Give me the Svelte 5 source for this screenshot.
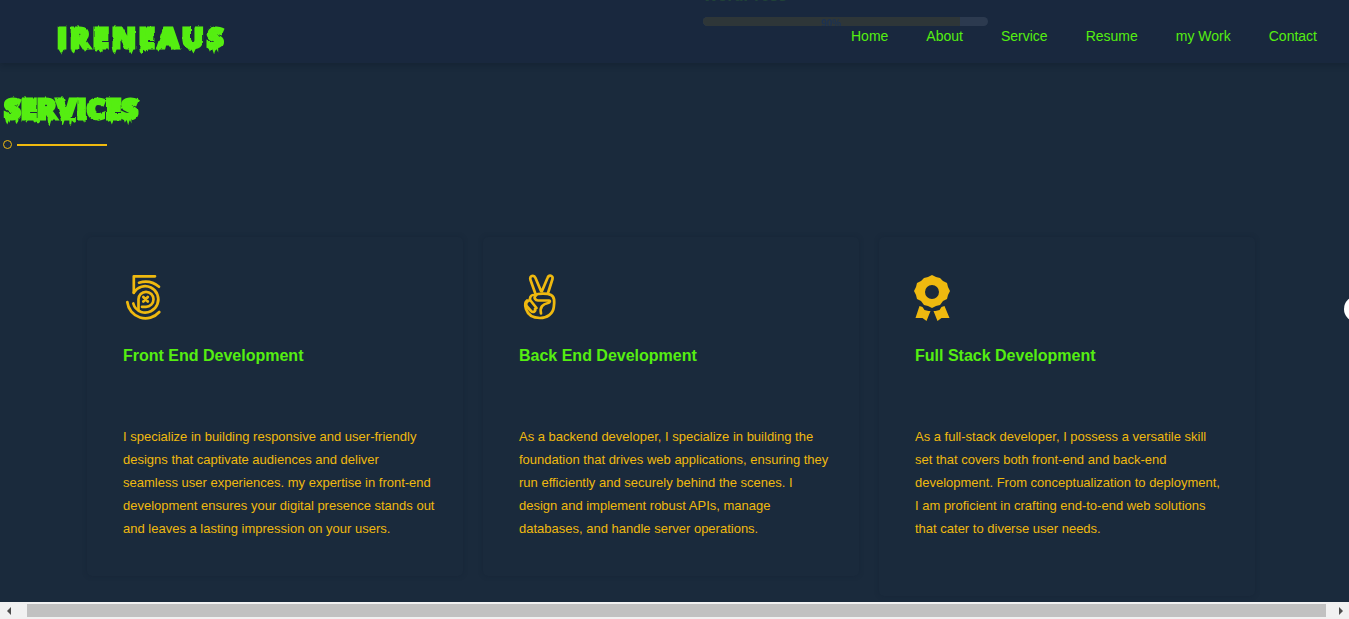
<script>
  const links = ['Home', 'About', 'Service', 'Resume', 'my Work', 'Contact'];
  const services = [
    { icon: 'five', title: 'Front End Development', text: 'I specialize in building responsive and user-friendly designs that captivate audiences and deliver seamless user experiences. my expertise in front-end development ensures your digital presence stands out and leaves a lasting impression on your users.' },
    { icon: 'peace', title: 'Back End Development', text: 'As a backend developer, I specialize in building the foundation that drives web applications, ensuring they run efficiently and securely behind the scenes. I design and implement robust APIs, manage databases, and handle server operations.' },
    { icon: 'award', title: 'Full Stack Development', text: 'As a full-stack developer, I possess a versatile skill set that covers both front-end and back-end development. From conceptualization to deployment, I am proficient in crafting end-to-end web solutions that cater to diverse user needs.' }
  ];
  const skill = 90;
</script>

<svelte:head><title>Ireneaus</title></svelte:head>

{#snippet drips()}
  <svg class="drips" viewBox="0 0 164 10" preserveAspectRatio="none" aria-hidden="true">
    <path d="M2 0v4l2 4 2-5 1 2V0zM14 0v5l2 3 2-6zM25 0l2 6 2-3V0zM36 0v4l2 2 2-3 2 4 2-2V0zM53 0l1 6 2 3 2-7V0zM69 0l1 7 2 2 2-6V0zM80 0v6l2 3 1-6 3 3 2-1V0zM96 0l2 6 2-4V0zM112 0l2 4 2-4zM126 0l2 5 2-2 2 5 2-5V0zM146 0l2 6 2-4 2 7 2-7 2 5V0z" />
  </svg>
{/snippet}

<svg class="defs" aria-hidden="true">
  <filter id="ragged" x="-5%" y="-10%" width="110%" height="130%" color-interpolation-filters="sRGB">
    <feTurbulence type="fractalNoise" baseFrequency="0.25 0.12" numOctaves="1" seed="7" result="n" />
    <feDisplacementMap in="SourceGraphic" in2="n" scale="3" xChannelSelector="R" yChannelSelector="G" />
  </filter>
</svg>

<div class="page">
  <header>
    <div class="ghost" aria-hidden="true">
      <div class="ghost-label">WordPress</div>
      <div class="track"><div class="fill" style="width: {skill}%"><span>{skill}%</span></div></div>
    </div>
    <a class="logo creepy" href="#home">IRENEAUS{@render drips()}</a>
    <nav>
      {#each links as link}
        <a href="#{link.replace(' ', '-').toLowerCase()}">{link}</a>
      {/each}
    </nav>
  </header>

  <main>
    <h2 class="creepy">SERVICES{@render drips()}</h2>
    <div class="rule"><i></i><b></b></div>

    <section class="cards">
      {#each services as s}
        <article>
          {#if s.icon === 'five'}
            <svg class="icon line" viewBox="-1 1 48 48" aria-hidden="true">
              <path d="M31 4.300H9.800V21" />
              <path d="M9.800 20.500a13.200 13.200 0 1 1 7.500 19.500c-4-1.500-7-4.500-8-8.500" />
              <path d="M15 10.700q11-3.500 20 4M3.300 30a18.300 18.300 0 0 0 32 10" />
              <path d="M14.500 38V27.300a7.500 7.500 0 1 1 7.500 7.500h-4" />
              <path d="M19.300 25l4.500 4.500M23.800 25l-4.500 4.500" />
            </svg>
          {:else if s.icon === 'peace'}
            <svg class="icon line" viewBox="-1 1 48 48" aria-hidden="true">
              <path d="M15.500 22L10.500 8c-1.500-4.500 3.500-5.500 5-2l5.500 13M22 19l5.500-13c1.500-4 6-2.500 5 1L28 21" />
              <path d="M15 23c3-1.500 12-2 16 0 4 2 3.500 7 2.800 12C33 42 27 46 20 46S8 43 6 37c-1.200-3.500-1-7 1-8.500" />
              <path d="M16 23.500c-3 2-.5 5 2 5h11c1.500 0 1 2-1 2.500-5 1-8.500 4-7 10.500" />
              <path d="M13 23c-2 0-4 3-2.500 5.500l6 7.500M9 28.500c-3 1-3.500 4-2 6l4 4.500c2 2 5 .5 4-2" />
            </svg>
          {:else}
            <svg class="icon" viewBox="0 0 48 48" aria-hidden="true">
              <path fill-rule="evenodd" d="M17 2l4 2 4 1 3 3 4 2 1 4 2 4-2 4-1 4-4 2-3 4-4 1-4 2-4-2-4-1-3-4-4-2-1-4-2-4 2-4 1-4 4-2 3-3 4-1zM17 12a7 7 0 1 0 0 14 7 7 0 1 0 0-14z" />
              <path d="M4.500 33l3 1 2 3 4 1 2 0-4 10-4-3-7 0zM29.500 33l-3 1-2 3-4 1-2 0 4 10 4-3 8 0z" />
            </svg>
          {/if}
          <h3>{s.title}</h3>
          <p>{s.text}</p>
        </article>
      {/each}
    </section>
  </main>

  <button class="side" aria-label="Open panel"></button>

  <div class="scrollbar">
    <button aria-label="Scroll left"><svg viewBox="0 0 8 8"><path d="M6 0v8L2 4z" /></svg></button>
    <div class="thumb"></div>
    <button aria-label="Scroll right"><svg viewBox="0 0 8 8"><path d="M2 0v8l4-4z" /></svg></button>
  </div>
</div>

<style>
  :global(body) { margin: 0; background: #1a2a3c; }
  * { box-sizing: border-box; }
  .page {
    position: relative;
    display: flex;
    flex-direction: column;
    height: 100vh;
    overflow: hidden;
    color: #efb90f;
    font-family: "Liberation Sans", Arial, sans-serif;
  }
  .defs { position: absolute; width: 0; height: 0; }
  header {
    position: relative;
    flex: none;
    display: flex;
    align-items: center;
    justify-content: space-between;
    height: 63px;
    padding: 0 32px 0 57px;
    background: #19283e;
    box-shadow: 0 2px 6px rgba(10, 20, 30, 0.3);
  }
  .creepy {
    position: relative;
    display: block;
    width: max-content;
    margin: 0;
    color: #55ee11;
    font-family: "Open Sans", "Liberation Sans", sans-serif;
    font-weight: 800;
    font-size: 29px;
    line-height: 36px;
    text-decoration: none;
    -webkit-text-stroke: 3px #55ee11;
    filter: url(#ragged);
  }
  .logo { margin-top: 10px; letter-spacing: 3px; }
  .drips {
    position: absolute;
    left: 0;
    bottom: 0;
    width: 100%;
    height: 8px;
    fill: #55ee11;
  }
  nav { display: flex; gap: 38px; padding-top: 9px; }
  nav a { color: #55ee11; font-size: 14px; line-height: 18px; text-decoration: none; }
  .ghost {
    position: absolute;
    top: -12px;
    left: 703px;
    width: 285px;
    opacity: 0.13;
    font-weight: bold;
  }
  .ghost-label { height: 29px; color: #55ee11; font-size: 16px; line-height: 16px; }
  .track { height: 9px; border-radius: 5px; background: #a9b4c4; overflow: hidden; }
  .fill { height: 100%; background: #b99518; color: #2f6fd0; text-align: center; font-size: 10px; line-height: 13px; }
  main { flex: 1; min-height: 0; overflow: hidden; padding: 27px 0 0; }
  h2.creepy { margin-left: 4px; }
  .rule { display: flex; align-items: center; gap: 5px; margin: 14px 0 0 3px; }
  .rule i { width: 9px; height: 9px; border: 1px solid #efb90f; border-radius: 50%; }
  .rule b { width: 90px; height: 2px; background: #efb90f; }
  .cards {
    display: grid;
    grid-template-columns: repeat(3, 1fr);
    align-items: start;
    gap: 20px;
    margin: 88px 94px 0 87px;
  }
  article {
    padding: 36px 27px 36px 36px;
    border-radius: 5px;
    box-shadow: 0 0 5px rgba(15, 28, 48, 0.3);
  }
  article:last-child { padding-right: 32px; padding-bottom: 56px; }
  .icon { display: block; width: 48px; height: 48px; overflow: visible; fill: #efb90f; }
  .line { fill: none; stroke: #efb90f; stroke-width: 2.700; stroke-linecap: round; stroke-linejoin: round; }
  h3 { margin: 25px 0 0; color: #55ee11; font-size: 16px; line-height: 20px; }
  p { margin: 59px 0 0; font-size: 13px; line-height: 23px; }
  .side {
    position: absolute;
    top: 296px;
    right: -21px;
    width: 26px;
    height: 26px;
    padding: 0;
    border: 0;
    border-radius: 50%;
    background: #fff;
  }
  .scrollbar { flex: none; display: flex; height: 17px; padding: 2px 0; gap: 10px; background: #f1f1f1; }
  .scrollbar button { display: grid; place-items: center; width: 17px; padding: 0; border: 0; background: none; }
  .scrollbar button:last-child { margin-left: -4px; }
  .scrollbar svg { width: 8px; height: 8px; fill: #4c4c4c; }
  .thumb { flex: 1; background: #c1c1c1; }
</style>
